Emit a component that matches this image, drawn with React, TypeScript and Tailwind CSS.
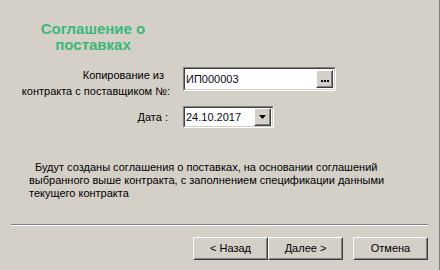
export default function App() {
  const font = { fontFamily: '"Liberation Sans", Arial, sans-serif' };

  const Sunken = ({ w, h, children }: { w: string; h: string; children: React.ReactNode }) => (
    <div className={`${w} ${h} border border-t-[#808080] border-l-[#808080] border-b-white border-r-white`}>
      <div className="flex h-full w-full items-center border border-t-[#404040] border-l-[#404040] border-b-[#d4d0c8] border-r-[#d4d0c8] bg-white">
        {children}
      </div>
    </div>
  );

  const Raised = ({ className, children }: { className: string; children: React.ReactNode }) => (
    <div className={`${className} border border-t-white border-l-white border-b-[#404040] border-r-[#404040] bg-[#d4d0c8]`}>
      <div className="flex h-full w-full items-center justify-center border border-t-[#d4d0c8] border-l-[#d4d0c8] border-b-[#808080] border-r-[#808080]">
        {children}
      </div>
    </div>
  );

  return (
    <div
      className="flex h-[270px] w-[440px] flex-col border-r border-[#808080] bg-[#d4d0c8] text-[11px] text-black"
      style={font}
    >
      {/* Заголовок */}
      <div className="mt-[21px] w-[186px] text-center text-[15px] font-bold leading-[16px] text-[#3cb878]">
        Соглашение о<br />поставках
      </div>

      {/* Копирование из контракта */}
      <div className="mt-[13px] flex items-start">
        <div className="w-[170px] text-right leading-[16px] pt-[1px]">
          <div className="pr-[6px]">Копирование из</div>
          <div>контракта с поставщиком №:</div>
        </div>
        <div className="ml-[13px] mt-[1px]">
          <Sunken w="w-[153px]" h="h-[24px]">
            <span className="flex-1 pl-[1px] text-[#0a0a20]">ИП000003</span>
            <Raised className="mr-[1px] h-[18px] w-[17px]">
              <div className="mt-[3px] flex gap-[1px]">
                <span className="h-[2px] w-[2px] bg-black" />
                <span className="h-[2px] w-[2px] bg-black" />
                <span className="h-[2px] w-[2px] bg-black" />
              </div>
            </Raised>
          </Sunken>
        </div>
      </div>

      {/* Дата */}
      <div className="mt-[7px] flex items-center">
        <div className="w-[168px] text-right">Дата :</div>
        <div className="ml-[15px]">
          <Sunken w="w-[91px]" h="h-[22px]">
            <span className="flex-1 pl-[1px] text-[#0a0a20]">24.10.2017</span>
            <Raised className="mr-[1px] h-[18px] w-[17px]">
              <svg width="7" height="4" viewBox="0 0 7 4">
                <path d="M0 0h7L3.5 4z" fill="#000" />
              </svg>
            </Raised>
          </Sunken>
        </div>
      </div>

      {/* Пояснение */}
      <div className="ml-[29px] mt-[33px] w-[380px] leading-[13px]">
        <div className="pl-[6px]">Будут созданы соглашения о поставках, на основании соглашений</div>
        <div>выбранного выше контракта, с заполнением спецификации данными</div>
        <div>текущего контракта</div>
      </div>

      {/* Разделитель */}
      <div className="mx-[11px] mt-auto border-t border-b border-t-[#808080] border-b-white" />

      {/* Кнопки */}
      <div className="mb-[10px] mt-[11px] flex pr-[11px] justify-end">
        <Raised className="h-[23px] w-[75px]">&lt; Назад</Raised>
        <Raised className="h-[23px] w-[75px]">Далее &gt;</Raised>
        <Raised className="ml-[10px] h-[23px] w-[75px]">Отмена</Raised>
      </div>
    </div>
  );
}
